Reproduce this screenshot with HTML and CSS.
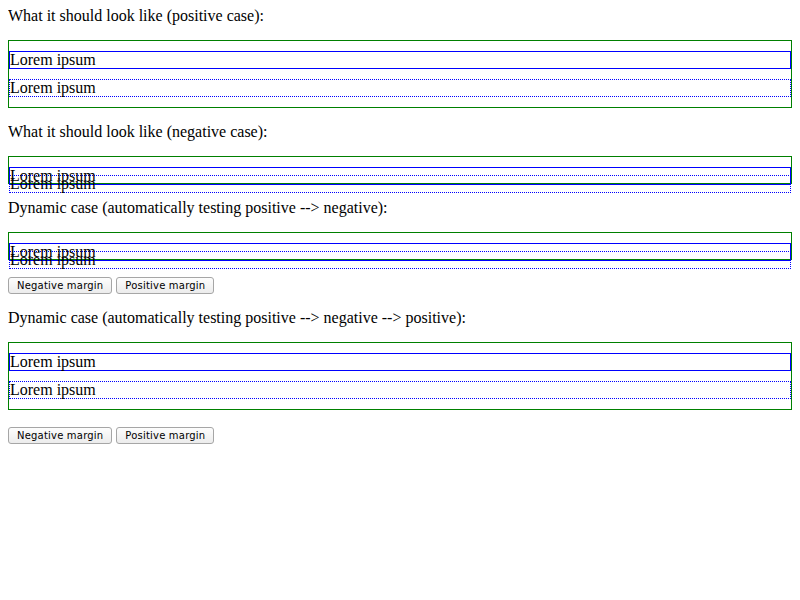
FILE: index.html
```html
<!DOCTYPE html>
<html>
<head>
<meta charset="utf-8">
<title>Margin collapse test</title>
<link rel="stylesheet" href="styles.css">
</head>
<body>
<div class="label">What it should look like (positive case):</div>
<div class="box">
  <div class="solid">Lorem ipsum</div>
  <div class="dotted">Lorem ipsum</div>
</div>
<div class="label">What it should look like (negative case):</div>
<div class="box">
  <div class="solid">Lorem ipsum</div>
  <div class="dotted neg">Lorem ipsum</div>
</div>
<div class="label">Dynamic case (automatically testing positive --&gt; negative):</div>
<div class="box">
  <div class="solid">Lorem ipsum</div>
  <div class="dotted neg">Lorem ipsum</div>
</div>
<div class="controls">
  <button class="btn" type="button">Negative margin</button>
  <button class="btn" type="button">Positive margin</button>
</div>
<div class="label">Dynamic case (automatically testing positive --&gt; negative --&gt; positive):</div>
<div class="box">
  <div class="solid">Lorem ipsum</div>
  <div class="dotted">Lorem ipsum</div>
</div>
<div class="controls">
  <button class="btn" type="button">Negative margin</button>
  <button class="btn" type="button">Positive margin</button>
</div>
</body>
</html>
```

FILE: styles.css
```css
html, body {
  background: #ffffff;
}
body {
  margin: 8px;
  font-family: "Liberation Serif", "Times New Roman", serif;
  font-size: 16px;
  line-height: 16px;
  color: #000000;
}
.label {
  margin: 0;
}
.box {
  border: 1px solid #008000;
  margin: 16px 0;
}
.solid {
  border: 1px solid #0000ff;
  margin: 10px 0 0;
}
.dotted {
  border: 1px dotted #0000ff;
  margin: 10px 0;
}
.dotted.neg {
  margin: -10px 0;
}
.controls {
  display: flex;
  gap: 4px;
  margin: 16px 0;
  padding-top: 1px;
}
.btn {
  font-family: "DejaVu Sans", Verdana, sans-serif;
  font-size: 10px;
  letter-spacing: 0.2px;
  line-height: 12px;
  height: 17px;
  padding: 1px 8px;
  margin: 0;
  color: #000000;
  border: 1px solid #a6a6a6;
  border-radius: 3px;
  background: linear-gradient(#fdfdfd, #ececec);
}
```
